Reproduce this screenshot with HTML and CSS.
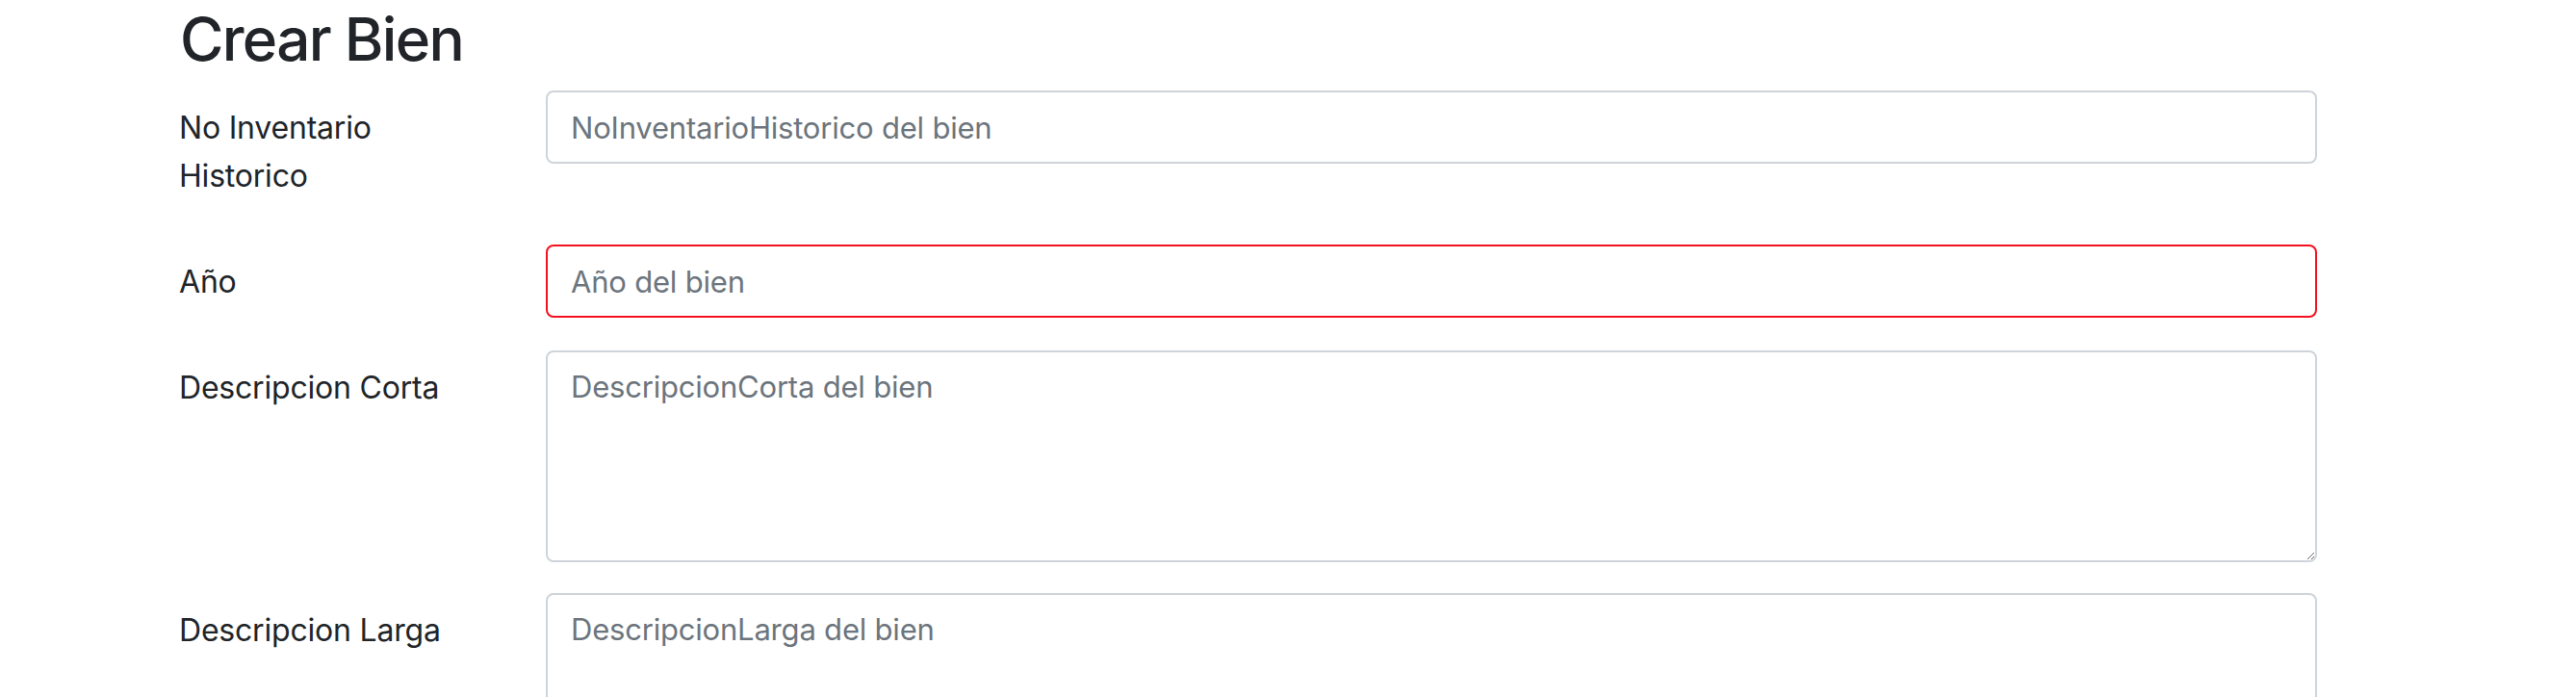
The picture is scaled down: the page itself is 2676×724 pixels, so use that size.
FILE: index.html
```html
<!DOCTYPE html>
<html lang="es">
<head>
<meta charset="utf-8">
<title>Crear Bien</title>
<link rel="stylesheet" href="styles.css">
</head>
<body>
<div class="container">
  <h2 class="title">Crear Bien</h2>
  <form class="form">
    <div class="form-row">
      <label class="form-label" for="noinv">No Inventario Historico</label>
      <input class="form-control" id="noinv" type="text" placeholder="NoInventarioHistorico del bien">
    </div>
    <div class="form-row">
      <label class="form-label" for="anio">Año</label>
      <input class="form-control is-invalid" id="anio" type="text" placeholder="Año del bien">
    </div>
    <div class="form-row">
      <label class="form-label" for="dcorta">Descripcion Corta</label>
      <textarea class="form-control textarea" id="dcorta" rows="4" placeholder="DescripcionCorta del bien"></textarea>
    </div>
    <div class="form-row">
      <label class="form-label" for="dlarga">Descripcion Larga</label>
      <textarea class="form-control textarea" id="dlarga" rows="4" placeholder="DescripcionLarga del bien"></textarea>
    </div>
  </form>
</div>
</body>
</html>
```

FILE: styles.css
```css
html, body {
  margin: 0;
  padding: 0;
  background: #ffffff;
}

body {
  font-family: Inter, "Noto Sans", "Liberation Sans", sans-serif;
  color: #212529;
  font-size: 32px;
  overflow: hidden;
}

.container {
  width: 2220px;
  margin-left: 187px;
}

.title {
  margin: 4px 0 16px 0;
  font-size: 62px;
  font-weight: 500;
  letter-spacing: -1.7px;
  line-height: 74px;
  color: #212529;
}

.form {
  margin: 0;
}

.form-row {
  display: grid;
  grid-template-columns: 320px 1840px;
  column-gap: 60px;
  align-items: start;
  margin-bottom: 32px;
}

.form-label {
  display: block;
  padding: 14px 0;
  margin-left: -1px;
  font-size: 32px;
  letter-spacing: -0.2px;
  line-height: 50px;
  color: #212529;
}

.form-control {
  display: block;
  box-sizing: border-box;
  width: 100%;
  height: 76px;
  margin: 0;
  padding: 12px 24px;
  font-family: Inter, "Noto Sans", "Liberation Sans", sans-serif;
  font-size: 31px;
  letter-spacing: -0.2px;
  line-height: 48px;
  color: #495057;
  background: #ffffff;
  border: 2px solid #ced4da;
  border-radius: 8px;
  outline: none;
}

.form-control::placeholder {
  color: #6c757d;
  opacity: 1;
}

.form-control.is-invalid {
  border-color: #f5101f;
}

.textarea {
  height: 220px;
  resize: vertical;
}
```
